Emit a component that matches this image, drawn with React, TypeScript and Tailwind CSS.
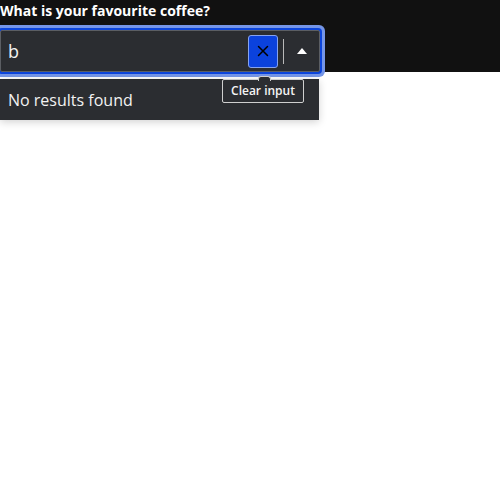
import { X } from "lucide-react";

export default function App() {
  return (
    <div className="min-h-screen bg-white font-['Open_Sans',sans-serif]">
      <div className="h-[72px] bg-[#111111] flex flex-col">
        <label className="text-white text-sm font-bold leading-[22px] mb-2">
          What is your favourite coffee?
        </label>

        <div className="relative w-[320px]">
          {/* input */}
          <div className="h-[42px] flex items-center border border-[#5b5e63] bg-[#2b2d31] rounded-[2px] shadow-[0_0_0_2px_#0c45dc,0_0_0_5px_#7596e8]">
            <input
              value="b"
              readOnly
              size={1}
              className="flex-1 w-0 bg-transparent pl-[7px] text-[18px] text-[#f2f2f2] outline-none"
            />
            <button className="shrink-0 w-[30px] h-[33px] flex items-center justify-center rounded-[3px] bg-[#0b42dd] border border-[#86a3ef]">
              <X className="w-[18px] h-[18px] text-black" strokeWidth={2} />
            </button>
            <span className="shrink-0 ml-[5px] w-px h-[25px] bg-[#b9b9b9]" />
            <button className="shrink-0 w-[35px] h-full flex items-center justify-center">
              <svg width="10" height="6" viewBox="0 0 10 6">
                <path d="M5 0 L10 6 L0 6 Z" fill="#ffffff" />
              </svg>
            </button>
          </div>

          {/* dropdown */}
          <div className="absolute left-0 top-[49px] w-[319px] h-[41px] bg-[#2b2d31] flex items-center pl-2 shadow-[0_2px_8px_rgba(0,0,0,0.18)]">
            <span className="text-base text-[#f2f2f2]">No results found</span>
          </div>

          {/* tooltip */}
          <div className="absolute left-[222px] top-[49px] w-[82px] h-[24px] bg-[#2b2d31] border border-[#cfcfcf] rounded-[2px] flex items-center justify-center">
            <span className="absolute -top-[4px] left-[35px] w-[13px] h-[5px] bg-[#2b2d31] border border-b-0 border-[#cfcfcf] rounded-t-[3px]" />
            <span className="text-xs font-semibold text-[#f4f4f4]">Clear input</span>
          </div>
        </div>
      </div>
    </div>
  );
}
